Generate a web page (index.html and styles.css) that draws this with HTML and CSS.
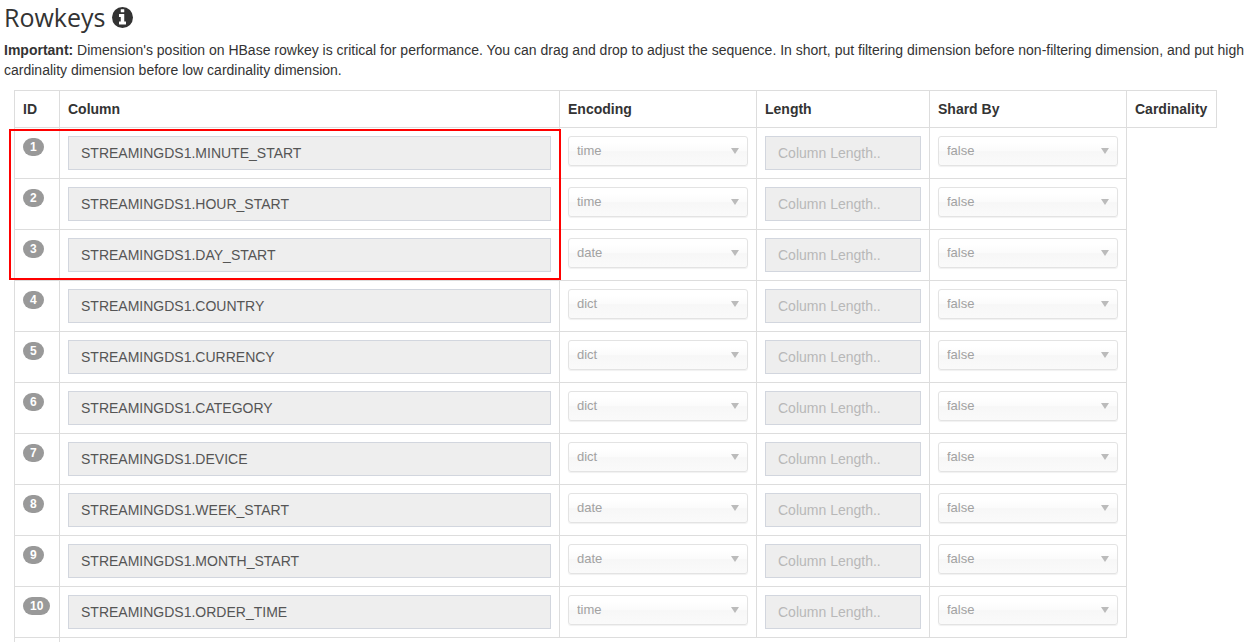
FILE: index.html
```
<!DOCTYPE html>
<html lang="en">
<head>
<meta charset="utf-8">
<title>Rowkeys</title>
<link rel="stylesheet" href="styles.css">
</head>
<body>
<main class="page">
<h3 class="title">Rowkeys
<svg class="info" viewBox="0 0 1536 1536" role="img" aria-label="Info"><circle cx="768" cy="768" r="768" fill="#333"/><path fill="#fff" d="M1024 1248v-160q0-14-9-23t-23-9h-96v-512q0-14-9-23t-23-9h-320q-14 0-23 9t-9 23v160q0 14 9 23t23 9h96v320h-96q-14 0-23 9t-9 23v160q0 14 9 23t23 9h448q14 0 23-9t9-23zM896 352v-160q0-14-9-23t-23-9h-192q-14 0-23 9t-9 23v160q0 14 9 23t23 9h192q14 0 23-9t9-23z"/></svg>
</h3>
<p class="note"><strong>Important:</strong> Dimension's position on HBase rowkey is critical for performance. You can drag and drop to adjust the sequence. In short, put filtering dimension before non-filtering dimension, and put high cardinality dimension before low cardinality dimension.</p>
<div class="table-wrap">
<table class="rowkeys">
<colgroup><col class="c-id"><col><col class="c-select"><col class="c-length"><col class="c-select"><col class="c-card"></colgroup>
<thead>
<tr><th>ID</th><th>Column</th><th>Encoding</th><th>Length</th><th>Shard By</th><th>Cardinality</th></tr>
</thead>
<tbody>
<tr><td><span class="badge">1</span></td><td><input class="field" aria-label="Column 1" value="STREAMINGDS1.MINUTE_START" disabled></td><td><div class="chosen"><select aria-label="Encoding 1" disabled><option>time</option></select></div></td><td><input class="field" aria-label="Length 1" placeholder="Column Length.." disabled></td><td><div class="chosen"><select aria-label="Shard by 1" disabled><option>false</option></select></div></td></tr>
<tr><td><span class="badge">2</span></td><td><input class="field" aria-label="Column 2" value="STREAMINGDS1.HOUR_START" disabled></td><td><div class="chosen"><select aria-label="Encoding 2" disabled><option>time</option></select></div></td><td><input class="field" aria-label="Length 2" placeholder="Column Length.." disabled></td><td><div class="chosen"><select aria-label="Shard by 2" disabled><option>false</option></select></div></td></tr>
<tr><td><span class="badge">3</span></td><td><input class="field" aria-label="Column 3" value="STREAMINGDS1.DAY_START" disabled></td><td><div class="chosen"><select aria-label="Encoding 3" disabled><option>date</option></select></div></td><td><input class="field" aria-label="Length 3" placeholder="Column Length.." disabled></td><td><div class="chosen"><select aria-label="Shard by 3" disabled><option>false</option></select></div></td></tr>
<tr><td><span class="badge">4</span></td><td><input class="field" aria-label="Column 4" value="STREAMINGDS1.COUNTRY" disabled></td><td><div class="chosen"><select aria-label="Encoding 4" disabled><option>dict</option></select></div></td><td><input class="field" aria-label="Length 4" placeholder="Column Length.." disabled></td><td><div class="chosen"><select aria-label="Shard by 4" disabled><option>false</option></select></div></td></tr>
<tr><td><span class="badge">5</span></td><td><input class="field" aria-label="Column 5" value="STREAMINGDS1.CURRENCY" disabled></td><td><div class="chosen"><select aria-label="Encoding 5" disabled><option>dict</option></select></div></td><td><input class="field" aria-label="Length 5" placeholder="Column Length.." disabled></td><td><div class="chosen"><select aria-label="Shard by 5" disabled><option>false</option></select></div></td></tr>
<tr><td><span class="badge">6</span></td><td><input class="field" aria-label="Column 6" value="STREAMINGDS1.CATEGORY" disabled></td><td><div class="chosen"><select aria-label="Encoding 6" disabled><option>dict</option></select></div></td><td><input class="field" aria-label="Length 6" placeholder="Column Length.." disabled></td><td><div class="chosen"><select aria-label="Shard by 6" disabled><option>false</option></select></div></td></tr>
<tr><td><span class="badge">7</span></td><td><input class="field" aria-label="Column 7" value="STREAMINGDS1.DEVICE" disabled></td><td><div class="chosen"><select aria-label="Encoding 7" disabled><option>dict</option></select></div></td><td><input class="field" aria-label="Length 7" placeholder="Column Length.." disabled></td><td><div class="chosen"><select aria-label="Shard by 7" disabled><option>false</option></select></div></td></tr>
<tr><td><span class="badge">8</span></td><td><input class="field" aria-label="Column 8" value="STREAMINGDS1.WEEK_START" disabled></td><td><div class="chosen"><select aria-label="Encoding 8" disabled><option>date</option></select></div></td><td><input class="field" aria-label="Length 8" placeholder="Column Length.." disabled></td><td><div class="chosen"><select aria-label="Shard by 8" disabled><option>false</option></select></div></td></tr>
<tr><td><span class="badge">9</span></td><td><input class="field" aria-label="Column 9" value="STREAMINGDS1.MONTH_START" disabled></td><td><div class="chosen"><select aria-label="Encoding 9" disabled><option>date</option></select></div></td><td><input class="field" aria-label="Length 9" placeholder="Column Length.." disabled></td><td><div class="chosen"><select aria-label="Shard by 9" disabled><option>false</option></select></div></td></tr>
<tr><td><span class="badge">10</span></td><td><input class="field" aria-label="Column 10" value="STREAMINGDS1.ORDER_TIME" disabled></td><td><div class="chosen"><select aria-label="Encoding 10" disabled><option>time</option></select></div></td><td><input class="field" aria-label="Length 10" placeholder="Column Length.." disabled></td><td><div class="chosen"><select aria-label="Shard by 10" disabled><option>false</option></select></div></td></tr>
</tbody>
<tfoot><tr><td></td><td colspan="4"></td></tr></tfoot>
</table>
<div class="highlight"></div>
</div>
</main>
</body>
</html>
```
FILE: styles.css
```
* { box-sizing: border-box; }
body {
  margin: 0;
  background: #fff;
  color: #333;
  font: 14px/20px "Liberation Sans", Arial, sans-serif;
}
.page { padding: 0 4px; }
.title {
  display: flex;
  align-items: center;
  gap: 7px;
  margin: 0 0 6px;
  font: 400 25px/34px "Open Sans", "Noto Sans", sans-serif;
}
.info { width: 21px; height: 21px; }
.note { margin: 0 0 10px; }
.table-wrap { position: relative; margin: 0 30px 0 10px; }
.rowkeys {
  width: 100%;
  table-layout: fixed;
  border-collapse: collapse;
}
.c-id { width: 45px; }
.c-select { width: 197px; }
.c-length { width: 173px; }
.c-card { width: 90px; }
th, td {
  padding: 8px;
  border: 1px solid #ddd;
  text-align: left;
  vertical-align: top;
}
td { height: 51px; }
tfoot td { height: 4px; padding: 0; border-width: 0 0 0 1px; }
.badge {
  display: block;
  width: fit-content;
  margin-top: 2px;
  padding: 3px 7px;
  border-radius: 10px;
  background: #999;
  color: #fff;
  font-size: 12px;
  font-weight: 700;
  line-height: 12px;
}
.field {
  display: block;
  width: 100%;
  height: 34px;
  margin: 0;
  padding: 0 12px;
  border: 1px solid #d2d6de;
  border-radius: 0;
  background: #eee;
  color: #555;
  font: inherit;
}
.field::placeholder { color: #b8b8b8; opacity: 1; }
.chosen { position: relative; }
.chosen select {
  display: block;
  appearance: none;
  width: 100%;
  height: 30px;
  margin: 0;
  padding: 0 8px;
  border: 1px solid #e3e3e3;
  border-radius: 3px;
  background: linear-gradient(#fff 20%, #fbfbfb 50%, #f7f7f7 52%, #fafafa 100%);
  box-shadow: 0 1px 1px rgba(0, 0, 0, .06);
  color: #a2a2a2;
  font: 13px/28px "Liberation Sans", Arial, sans-serif;
  opacity: 1;
}
.chosen::after {
  content: "";
  position: absolute;
  top: 12px;
  right: 9px;
  border: solid transparent;
  border-width: 6px 4px 0;
  border-top-color: #bbb;
}
.highlight {
  position: absolute;
  top: 39px;
  left: -5px;
  right: 656px;
  height: 151px;
  border: 2px solid #f00;
  pointer-events: none;
}
```
